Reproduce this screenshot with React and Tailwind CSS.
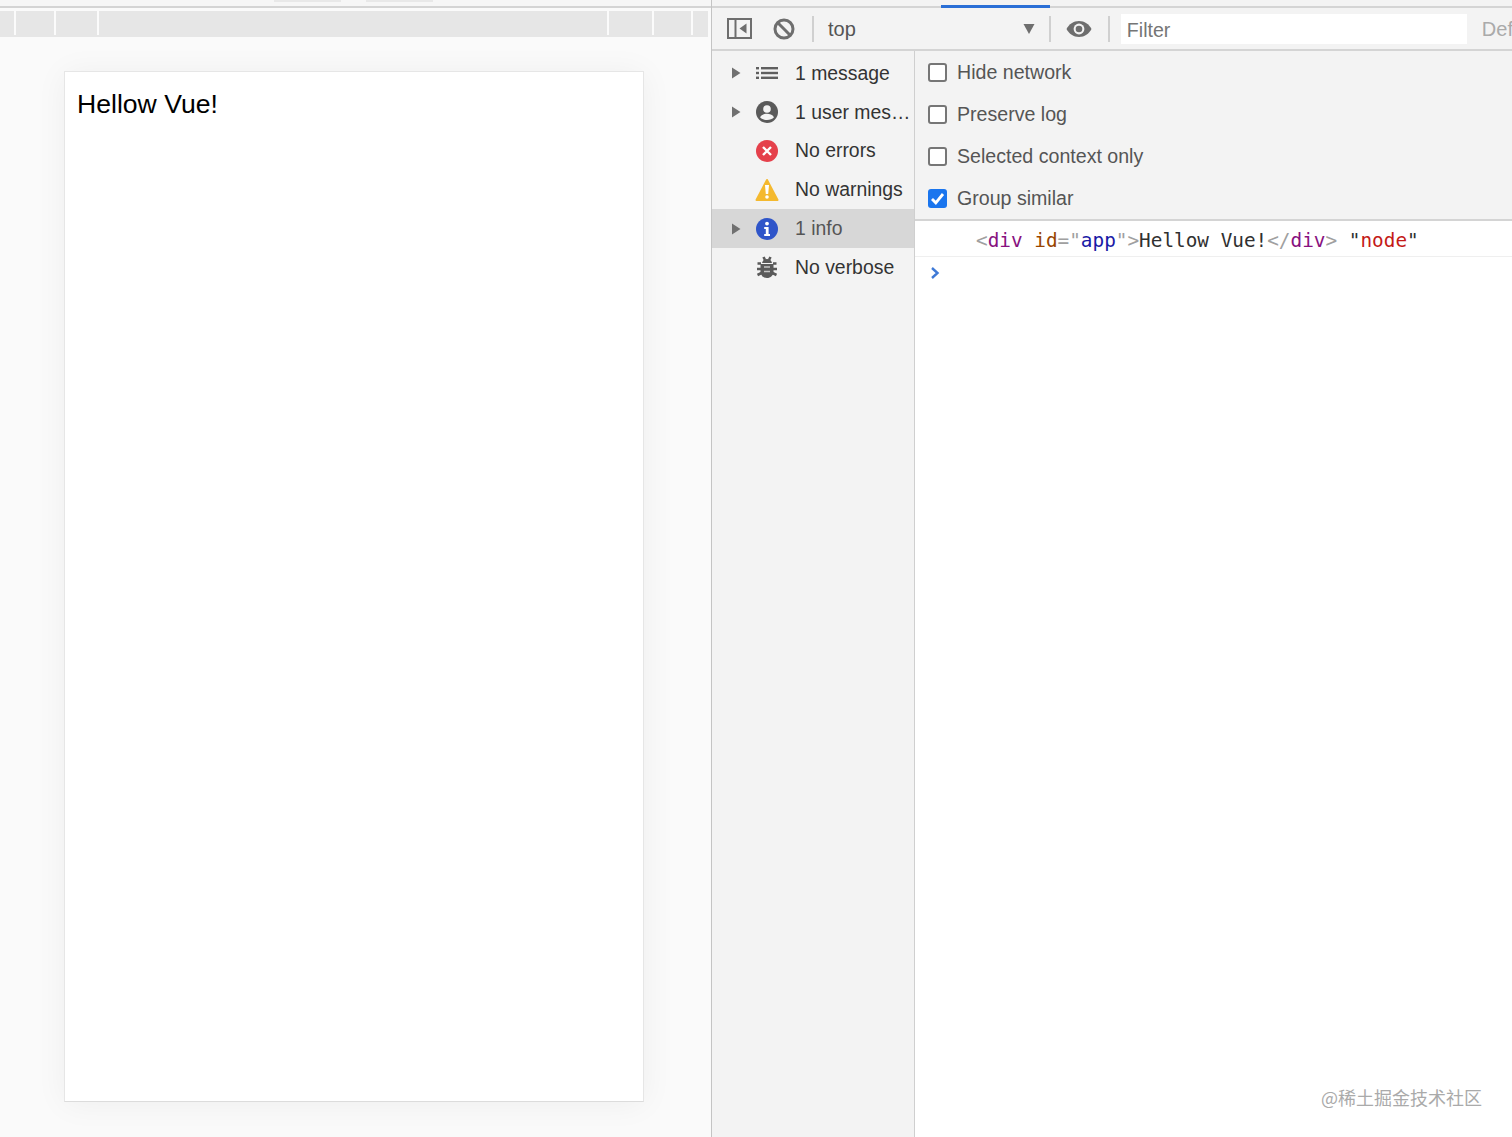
const sans = { fontFamily: '"Liberation Sans", Arial, sans-serif' }

const Arrow = () => (
  <svg width="10" height="14" viewBox="0 0 10 14"><path d="M1 1.5 L9.5 7 L1 12.5 Z" fill="#707070" /></svg>
)

const ListIcon = () => (
  <svg width="24" height="24" viewBox="0 0 24 24" fill="#5f5f5f">
    <rect x="1" y="6" width="3" height="2.4" />
    <rect x="1" y="10.8" width="3" height="2.4" />
    <rect x="1" y="15.6" width="3" height="2.4" />
    <rect x="6" y="6" width="17" height="2.4" />
    <rect x="6" y="10.8" width="17" height="2.4" />
    <rect x="6" y="15.6" width="17" height="2.4" />
  </svg>
)

const UserIcon = () => (
  <svg width="24" height="24" viewBox="0 0 24 24">
    <circle cx="12" cy="12" r="11" fill="#5a5a5a" />
    <circle cx="12" cy="9" r="3.8" fill="#f3f3f3" />
    <path d="M5 17.2 C6.5 14.4 9.5 13.8 12 13.8 C14.5 13.8 17.5 14.4 19 17.2 C17.4 19 14.8 20 12 20 C9.2 20 6.6 19 5 17.2 Z" fill="#f3f3f3" />
  </svg>
)

const ErrorIcon = () => (
  <svg width="24" height="24" viewBox="0 0 24 24">
    <circle cx="12" cy="12" r="11" fill="#e5404b" />
    <path d="M8 8 L16 16 M16 8 L8 16" stroke="#fff" strokeWidth="2.4" />
  </svg>
)

const WarnIcon = () => (
  <svg width="24" height="24" viewBox="0 0 24 24">
    <path d="M12 2 L22.5 22 L1.5 22 Z" fill="#f4b92f" stroke="#f4b92f" strokeWidth="2" strokeLinejoin="round" />
    <path d="M10 7 H14 L13.2 16 H10.8 Z" fill="#fff" />
    <circle cx="12" cy="19" r="1.8" fill="#fff" />
  </svg>
)

const InfoIcon = () => (
  <svg width="24" height="24" viewBox="0 0 24 24">
    <circle cx="12" cy="12" r="11" fill="#2f55c9" />
    <circle cx="12" cy="6.6" r="1.9" fill="#fff" />
    <path d="M9.2 10 H13.6 V17 H15 V19 H9.2 V17 H10.8 V12 H9.2 Z" fill="#fff" />
  </svg>
)

const BugIcon = () => (
  <svg width="24" height="24" viewBox="0 0 24 24" fill="#5a5a5a">
    <path d="M7 8 C7.5 5.6 9.5 4 12 4 C14.5 4 16.5 5.6 17 8 Z" />
    <path d="M5.5 9 H18.5 V16.5 C18.5 20.5 15.5 23 12 23 C8.5 23 5.5 20.5 5.5 16.5 Z" />
    <path d="M8.5 2 L10 5 M15.5 2 L14 5 M2.5 8.5 H6 M21.5 8.5 H18 M2 14 H6 M22 14 H18 M2.5 20 L6.5 18 M21.5 20 L17.5 18" stroke="#5a5a5a" strokeWidth="2.6" fill="none" />
    <path d="M9 12 H15 M9 16.5 H15" stroke="#f3f3f3" strokeWidth="1.6" opacity="0.7" />
  </svg>
)

const rows = [
  { label: '1 message', icon: ListIcon, arrow: true },
  { label: '1 user mes…', icon: UserIcon, arrow: true },
  { label: 'No errors', icon: ErrorIcon },
  { label: 'No warnings', icon: WarnIcon },
  { label: '1 info', icon: InfoIcon, arrow: true, selected: true },
  { label: 'No verbose', icon: BugIcon }
]

const settings = [
  { label: 'Hide network' },
  { label: 'Preserve log' },
  { label: 'Selected context only' },
  { label: 'Group similar', checked: true }
]

const Checkbox = ({ checked }) =>
  checked ? (
    <span className="w-[19px] h-[19px] rounded-[3px] bg-[#1a75ee] flex items-center justify-center shrink-0">
      <svg width="15" height="15" viewBox="0 0 15 15">
        <path d="M2 8 L5.8 11.8 L13 3" stroke="#fff" strokeWidth="2.8" fill="none" />
      </svg>
    </span>
  ) : (
    <span className="w-[19px] h-[19px] rounded-[3px] bg-white border-2 border-[#767676] shrink-0" />
  )

const Separator = () => <div className="w-[2px] h-[26px] bg-[#d0d0d0] shrink-0" />

const Ruler = () => {
  const widths = [14, 38, 41, 510, 43, 37, 13]
  return (
    <div className="flex items-start h-[26px] w-[708px] mt-[3px] bg-[#e6e6e6]">
      {widths.map((w, i) => (
        <div key={i} className="flex items-start h-full" style={{ width: w + 2 }}>
          <div className="flex-1" />
          {i < widths.length - 1 && <div className="w-[2px] h-[24px] bg-[#fbfbfb]" />}
        </div>
      ))}
    </div>
  )
}

const App = () => {
  return (
    <div className="w-[1512px] h-[1137px] flex overflow-hidden bg-white" style={sans}>
      {/* device preview */}
      <div className="w-[711px] shrink-0 flex flex-col bg-[#fafafa]">
        <div className="h-[8px] shrink-0 bg-[#f6f6f6] border-b-2 border-[#d4d4d4] flex items-start">
          <div className="ml-[274px] w-[67px] h-[2px] bg-[#e8e8e8]" />
          <div className="ml-[25px] w-[67px] h-[2px] bg-[#e8e8e8]" />
        </div>
        <Ruler />
        <div className="mt-[34px] ml-[64px] w-[580px] h-[1031px] bg-white border border-[#e6e6e6] border-b-[#dcdcdc] shadow-[0_2px_30px_rgba(0,0,0,0.05)] pl-[12px] pt-[14px]">
          <div className="text-[26.6px] leading-[36px] text-black">Hellow Vue!</div>
        </div>
      </div>

      <div className="w-[1px] shrink-0 bg-[#c4c4c4]" />

      {/* devtools console */}
      <div className="flex-1 min-w-0 flex flex-col">
        <div className="h-[8px] shrink-0 bg-[#f3f3f3] border-b-2 border-[#d4d4d4] flex items-start">
          <div className="ml-[229px] mt-[5px] w-[109px] h-[3px] bg-[#2a6fd6]" />
        </div>

        <div className="h-[43px] shrink-0 bg-[#f3f3f3] border-b-2 border-[#d4d4d4] flex items-center overflow-hidden">
          <svg className="ml-[15px] shrink-0" width="25" height="21" viewBox="0 0 25 21" fill="none">
            <rect x="1" y="1" width="23" height="19" stroke="#6e6e6e" strokeWidth="2" />
            <path d="M8.5 1 V20" stroke="#6e6e6e" strokeWidth="2" />
            <path d="M19.5 5.5 V15.5 L12.5 10.5 Z" fill="#6e6e6e" />
          </svg>
          <svg className="ml-[21px] shrink-0" width="22" height="22" viewBox="0 0 22 22" fill="none">
            <circle cx="11" cy="11" r="9" stroke="#6e6e6e" strokeWidth="3" />
            <path d="M4.8 4.8 L17.2 17.2" stroke="#6e6e6e" strokeWidth="3" />
          </svg>
          <div className="ml-[17px]"><Separator /></div>
          <span className="ml-[14px] text-[20px] text-[#555]">top</span>
          <svg className="ml-[167px] shrink-0" width="12" height="12" viewBox="0 0 12 12">
            <path d="M0.5 1 H11.5 L6 11 Z" fill="#6e6e6e" />
          </svg>
          <div className="ml-[14px]"><Separator /></div>
          <svg className="ml-[15px] shrink-0" width="26" height="18" viewBox="0 0 26 18">
            <path d="M13 1 C7.5 1 3 4.2 0.5 9 C3 13.8 7.5 17 13 17 C18.5 17 23 13.8 25.5 9 C23 4.2 18.5 1 13 1 Z" fill="#6e6e6e" />
            <circle cx="13" cy="9" r="5.4" fill="#f3f3f3" />
            <circle cx="13" cy="9" r="3.3" fill="#6e6e6e" />
          </svg>
          <div className="ml-[16px]"><Separator /></div>
          <div className="ml-[11px] w-[346px] h-[30px] bg-white pl-[6px] pt-[4px] flex items-center shrink-0 text-[19.6px] text-[#757575]">Filter</div>
          <span className="ml-[15px] pt-[1px] text-[20px] text-[#aaaaaa] shrink-0">Default levels</span>
        </div>

        <div className="flex-1 flex min-h-0">
          {/* sidebar */}
          <div className="w-[202px] shrink-0 bg-[#f3f3f3] pt-[3px]">
            {rows.map((row) => {
              const Icon = row.icon
              return (
                <div
                  key={row.label}
                  className={`h-[38.8px] flex items-center text-[19.4px] whitespace-nowrap ${row.selected ? 'bg-[#d7d7d7] text-[#555]' : 'text-[#333]'}`}
                >
                  <div className="ml-[19px] w-[10px] shrink-0 flex items-center">{row.arrow && <Arrow />}</div>
                  <div className="ml-[14px] shrink-0 flex items-center"><Icon /></div>
                  <div className="ml-[16px]">{row.label}</div>
                </div>
              )
            })}
          </div>
          <div className="w-[1px] shrink-0 bg-[#cfcfcf]" />

          {/* settings + messages */}
          <div className="flex-1 min-w-0 flex flex-col relative">
            <div className="h-[170px] shrink-0 bg-[#f3f3f3] border-b-2 border-[#d4d4d4]">
              {settings.map((s) => (
                <div key={s.label} className="h-[42px] flex items-center pl-[13px] gap-[10px] text-[19.6px] text-[#555]">
                  <Checkbox checked={s.checked} />
                  <span className="mt-[1px]">{s.label}</span>
                </div>
              ))}
            </div>
            <div
              className="h-[36px] shrink-0 border-b border-[#efefef] pl-[61px] pt-[5px] flex items-center text-[19.35px] whitespace-pre"
              style={{ fontFamily: '"DejaVu Sans Mono", monospace' }}
            >
              <span className="text-[#a0a0a0]">&lt;</span>
              <span className="text-[#881280]">div</span>
              <span> </span>
              <span className="text-[#994500]">id</span>
              <span className="text-[#a0a0a0]">="</span>
              <span className="text-[#1a1aa6]">app</span>
              <span className="text-[#a0a0a0]">"&gt;</span>
              <span className="text-[#303030]">Hellow Vue!</span>
              <span className="text-[#a0a0a0]">&lt;/</span>
              <span className="text-[#881280]">div</span>
              <span className="text-[#a0a0a0]">&gt;</span>
              <span> </span>
              <span className="text-[#303030]">"</span>
              <span className="text-[#c41a16]">node</span>
              <span className="text-[#303030]">"</span>
            </div>
            <div className="pl-[15px] pt-[9px]">
              <svg width="10" height="14" viewBox="0 0 10 14" fill="none">
                <path d="M2 2 L7.5 7 L2 12" stroke="#3f7ad6" strokeWidth="2.4" />
              </svg>
            </div>
            <div
              className="absolute right-[30px] bottom-[26px] text-[18px] leading-[28px] text-[#aaaaaa]"
              style={{ fontFamily: '"Noto Sans CJK SC", sans-serif' }}
            >
              @稀土掘金技术社区
            </div>
          </div>
        </div>
      </div>
    </div>
  )
}

export default App
